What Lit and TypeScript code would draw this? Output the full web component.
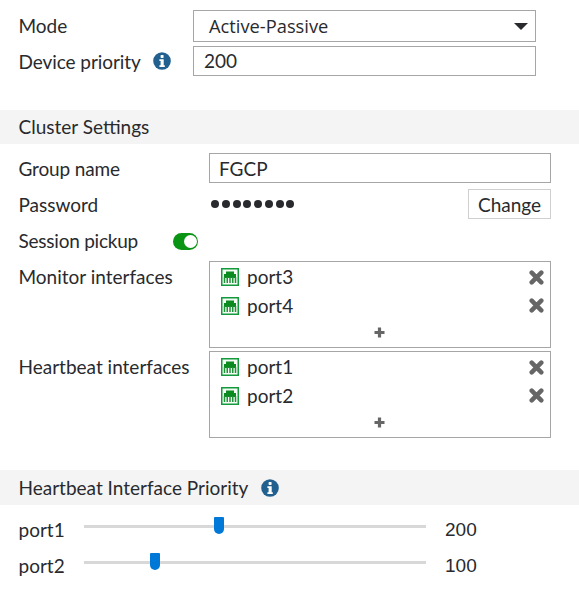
import { LitElement, html, css, svg } from "lit";
import { customElement } from "lit/decorators.js";

const info = html`<svg class="info" viewBox="0 0 18 18" width="18" height="18" aria-hidden="true">
  <circle cx="9" cy="9" r="8.8" fill="#22618f"></circle>
  <rect x="7.6" y="3" width="3" height="3" rx="0.7" fill="#fff"></rect>
  <path d="M6.4 7.3h4.3v6h1.1v1.6H6.4v-1.6h1.2V8.9H6.4z" fill="#fff"></path>
</svg>`;

const portIcon = html`<svg class="port" viewBox="0 0 18 18" width="18" height="18" aria-hidden="true">
  <rect x="0.75" y="0.75" width="16.5" height="16.5" fill="#f6fbf6" stroke="#139a3c" stroke-width="1.5"></rect>
  <path d="M3 6h2V3.5h8V6h2v4H3z" fill="#0b8a1f"></path>
  ${[3.5, 6.25, 9, 11.75, 14.5].map((x) => svg`<rect x="${x - 0.75}" y="9" width="1.5" height="6" fill="#1f9238"></rect>`)}
</svg>`;

const closeIcon = html`<svg class="x" viewBox="0 0 15 15" width="15" height="15" aria-hidden="true">
  <path d="M2.7 2.7l9.6 9.6M12.3 2.7l-9.6 9.6" stroke="#666" stroke-width="4.5" stroke-linecap="round"></path>
</svg>`;

const plusIcon = html`<svg viewBox="0 0 11 11" width="11" height="11" aria-hidden="true">
  <path d="M5.5 0.5v10M0.5 5.5h10" stroke="#666" stroke-width="3.2"></path>
</svg>`;

@customElement("app-root")
export class AppRoot extends LitElement {
  static styles = css`
    :host {
      display: block;
      width: 579px;
      height: 614px;
      overflow: hidden;
      background: #fff;
      color: #282a2e;
      font-family: Lato, sans-serif;
      font-size: 19px;
      line-height: 24px;
    }
    .top { padding: 10px 43px 0 18.5px; display: flex; flex-direction: column; gap: 4px; }
    .row { display: flex; align-items: center; }
    .top .label { width: 174.5px; display: flex; align-items: center; gap: 13px; flex: none; }
    .low { padding-top: 2px; }
    .dev { letter-spacing: -0.07px; }
    .box {
      box-sizing: border-box;
      border: 1px solid #a6a6a6;
      background: #fff;
    }
    .select {
      flex: 1;
      height: 32px;
      display: flex;
      align-items: center;
      justify-content: space-between;
      padding: 0 7px 0 15px;
      font-family: "Open Sans", sans-serif;
      font-size: 18.3px;
    }
    .caret { width: 0; height: 0; border-left: 7px solid transparent; border-right: 7px solid transparent; border-top: 7.5px solid #282a2e; }
    .input { flex: 1; height: 30px; display: flex; align-items: center; padding: 0 10px; }
    .input.group { padding: 2px 9px 0; }
    .section {
      background: #f4f4f4;
      height: 34px;
      padding: 0 18.5px;
      display: flex;
      align-items: center;
      gap: 13px;
    }
    .s1 { margin-top: 34px; }
    .s2 { margin-top: 32px; height: 35px; }
    .form { padding: 9px 28px 0 18.5px; display: flex; flex-direction: column; }
    .form .label { width: 190.5px; flex: none; }
    .form .row.g { height: 30px; }
    .form .row.p { height: 30px; margin-top: 6px; justify-content: space-between; }
    .tight1 { letter-spacing: -0.15px; }
    .tight2 { letter-spacing: -0.23px; }
    .pwd { flex: 1; display: flex; gap: 2.75px; padding-left: 2px; }
    .pwd i { width: 8px; height: 8px; border-radius: 50%; background: #282a2e; }
    .btn {
      box-sizing: border-box;
      width: 83px;
      height: 30px;
      padding-top: 2px;
      border: 1px solid #cfcfcf;
      display: flex;
      align-items: center;
      justify-content: center;
    }
    .sess { height: 18px; margin-top: 13px; }
    .sess .name { width: 154.5px; flex: none; }
    .toggle {
      width: 25px;
      height: 17px;
      border-radius: 9px;
      background: #0a9413;
      position: relative;
    }
    .toggle::after {
      content: "";
      position: absolute;
      right: 1.5px;
      top: 2px;
      width: 13px;
      height: 13px;
      border-radius: 50%;
      background: #fff;
    }
    .multi { align-items: flex-start; }
    .multi .label { margin-top: 4px; }
    .list {
      flex: 1;
      height: 87px;
      padding: 1px 6px 0 11px;
      display: flex;
      flex-direction: column;
    }
    .m1 { margin-top: 11px; }
    .m2 { margin-top: 3px; }
    .item { height: 28px; display: flex; align-items: center; gap: 8px; }
    .item + .item { margin-top: 0.5px; }
    .item .n { flex: 1; }
    .add { display: flex; justify-content: center; padding: 7.5px 7px 0 0; }
    svg { display: block; flex: none; }
    .info.dev-i { margin-left: -1px; }
    .sliders { padding: 12px 0 0 18.5px; display: flex; flex-direction: column; gap: 12px; }
    .sl { height: 24px; display: flex; align-items: center; }
    .sl .name { width: 65.5px; flex: none; position: relative; top: 1px; }
    .track { width: 342px; height: 3px; background: #d8d8d8; position: relative; top: -3px; flex: none; }
    .thumb {
      position: absolute;
      top: -8px;
      width: 10px;
      height: 17px;
      margin-left: -5px;
      background: #0078d7;
      border-radius: 1px 1px 5px 5px;
    }
    .val { margin-left: 19px; font-family: "Liberation Sans", sans-serif; position: relative; top: 1px; }
  `;

  private list(ports: string[]) {
    return html`<div class="box list">
      ${ports.map((p) => html`<div class="item">${portIcon}<span class="n">${p}</span>${closeIcon}</div>`)}
      <div class="add">${plusIcon}</div>
    </div>`;
  }

  private slider(name: string, value: number, pos: number) {
    return html`<div class="sl">
      <span class="name">${name}</span>
      <div class="track"><div class="thumb" style="left:${pos}px"></div></div>
      <span class="val">${value}</span>
    </div>`;
  }

  render() {
    return html`
      <div class="top">
        <div class="row">
          <span class="label">Mode</span>
          <div class="box select"><span>Active-Passive</span><span class="caret"></span></div>
        </div>
        <div class="row">
          <span class="label"><span class="low dev">Device priority</span><span class="info dev-i">${info}</span></span>
          <div class="box input">200</div>
        </div>
      </div>
      <div class="section s1">Cluster Settings</div>
      <div class="form">
        <div class="row g"><span class="label low tight1">Group name</span><div class="box input group">FGCP</div></div>
        <div class="row p">
          <span class="label low">Password</span>
          <div class="pwd">${Array.from({ length: 8 }, () => html`<i></i>`)}</div>
          <div class="btn">Change</div>
        </div>
        <div class="row sess"><span class="name tight2">Session pickup</span><span class="toggle"></span></div>
        <div class="row multi m1"><span class="label">Monitor interfaces</span>${this.list(["port3", "port4"])}</div>
        <div class="row multi m2"><span class="label">Heartbeat interfaces</span>${this.list(["port1", "port2"])}</div>
      </div>
      <div class="section s2">Heartbeat Interface Priority ${info}</div>
      <div class="sliders">
        ${this.slider("port1", 200, 135)}
        ${this.slider("port2", 100, 71)}
      </div>
    `;
  }
}
